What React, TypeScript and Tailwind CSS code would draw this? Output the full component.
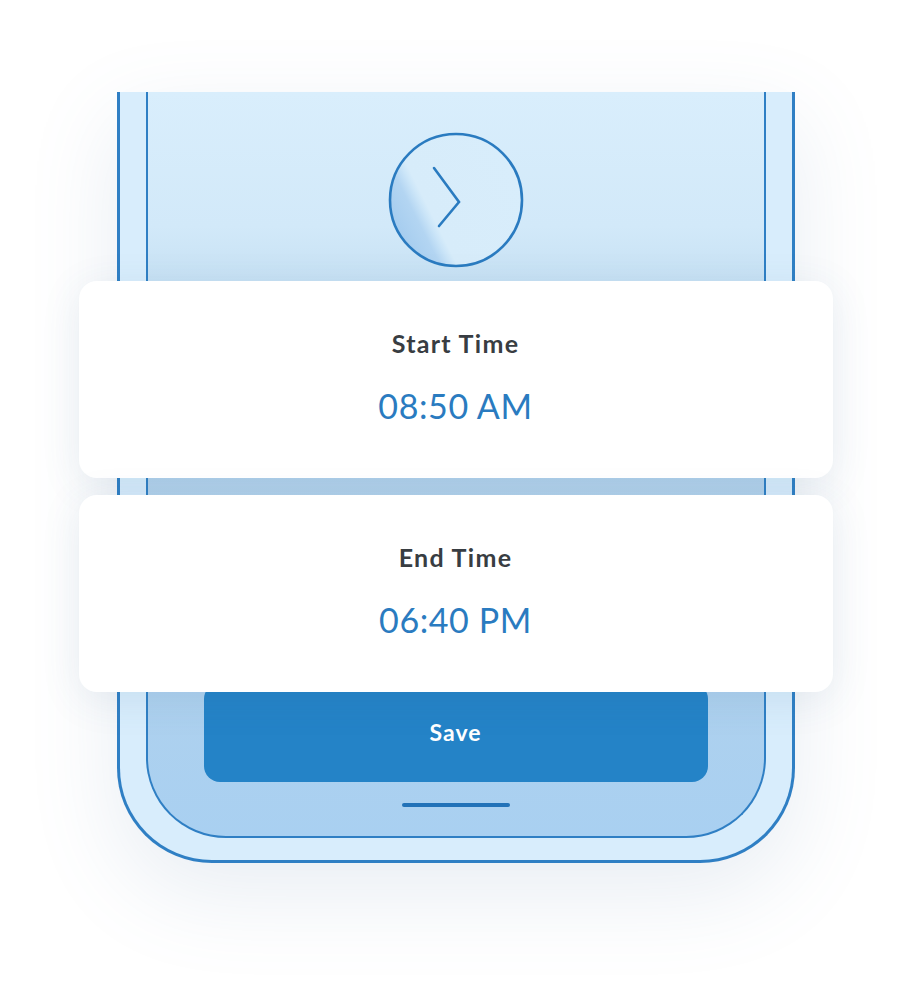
import React from 'react';

const TimeCard = ({ label, value }: { label: string; value: string }) => (
  <div className="relative z-10 -mx-[69px] flex h-[197px] flex-col items-center rounded-[18px] bg-white pt-[47px] shadow-[0_8px_40px_rgba(60,100,140,0.10)]">
    <div className="text-[25px] leading-[30px] font-bold tracking-[1.3px] text-[#383d42]">{label}</div>
    <div className="mt-[28px] text-[34px] leading-[40px] tracking-[0.6px] text-[#2a7bc0]">{value}</div>
  </div>
);

const ClockBadge = () => (
  <svg width="136" height="136" viewBox="0 0 136 136" className="block">
    <defs>
      <linearGradient id="shade" gradientUnits="userSpaceOnUse" x1="-35.7" y1="18" x2="89.3" y2="-45.1">
        <stop offset="0" stopColor="#a3cbee" />
        <stop offset="0.19" stopColor="#b3d5f2" />
        <stop offset="0.26" stopColor="#cbe5f8" />
        <stop offset="0.3" stopColor="#d7ecfa" />
        <stop offset="1" stopColor="#d8edfb" />
      </linearGradient>
    </defs>
    <circle cx="68" cy="68" r="66" fill="url(#shade)" stroke="#2a7bc0" strokeWidth="2.6" />
    <polyline
      points="46,36 71,70 51,94"
      fill="none"
      stroke="#2a7bc0"
      strokeWidth="2.6"
      strokeLinecap="round"
      strokeLinejoin="miter"
    />
  </svg>
);

export default function App() {
  return (
    <div className="flex min-h-[1004px] w-[910px] justify-center bg-white pt-[92px] font-['Lato','Open_Sans',sans-serif]">
      {/* phone frame */}
      <div className="ml-[1px] h-[771px] w-[678px] rounded-b-[95px] border-x-[3px] border-b-[3px] border-t-0 border-[#2f7fc4] bg-[#d8edfc] px-[26px] pb-[22px] shadow-[0_30px_90px_rgba(90,130,170,0.14)]">
        <div className="flex h-full flex-col rounded-b-[80px] border-x-[2.5px] border-b-[2.5px] border-t-0 border-[#2f7fc4] bg-[linear-gradient(180deg,#d9eefc_0%,#d2e9f9_18%,#c0dcf0_30%,#b4d3ec_50%,#aed1ee_80%,#a9d0f1_100%)]">
          <div className="flex justify-center pt-[40px]">
            <ClockBadge />
          </div>
          <div className="mt-[13px] flex flex-col gap-[17px]">
            <TimeCard label="Start Time" value="08:50 AM" />
            <TimeCard label="End Time" value="06:40 PM" />
          </div>
          <div className="mx-[56px] -mt-[9px] flex h-[99px] items-center justify-center rounded-[16px] bg-[#2483c7] text-[23px] font-bold tracking-[1px] text-white">
            Save
          </div>
          <div className="mx-auto mt-[21px] h-[4px] w-[108px] rounded-full bg-[#2272b8]" />
        </div>
      </div>
    </div>
  );
}
